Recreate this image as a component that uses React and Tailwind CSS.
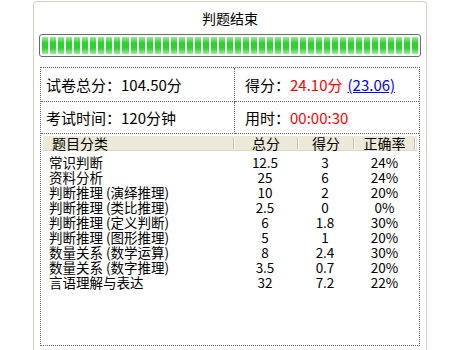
const rows = [
  { name: '常识判断', total: '12.5', score: '3', rate: '24%' },
  { name: '资料分析', total: '25', score: '6', rate: '24%' },
  { name: '判断推理 (演绎推理)', total: '10', score: '2', rate: '20%' },
  { name: '判断推理 (类比推理)', total: '2.5', score: '0', rate: '0%' },
  { name: '判断推理 (定义判断)', total: '6', score: '1.8', rate: '30%' },
  { name: '判断推理 (图形推理)', total: '5', score: '1', rate: '20%' },
  { name: '数量关系 (数学运算)', total: '8', score: '2.4', rate: '30%' },
  { name: '数量关系 (数字推理)', total: '3.5', score: '0.7', rate: '20%' },
  { name: '言语理解与表达', total: '32', score: '7.2', rate: '22%' },
];

const Divider = () => (
  <span className="h-[11px] w-[2px] border-l border-[#c5c2b0] border-r border-r-white shrink-0"></span>
);

const App = () => {
  const segments = Array.from({ length: 47 });

  return (
    <div className="w-[460px] h-[350px] overflow-hidden bg-white text-black font-['Noto_Sans_CJK_SC',sans-serif]">
      <div className="ml-[33px] mt-[1px] w-[394px] h-[360px] border border-b-0 border-[#d3d0bd] rounded-t-[4px] bg-white">
        <div className="h-[32px] flex items-center justify-center text-[14px] leading-none">判题结束</div>

        {/* progress */}
        <div className="ml-[5px] w-[382px] h-[23px] rounded-[3px] border border-[#6b6b6b] bg-white p-[2px]">
          <div className="flex gap-[2px] h-full">
            {segments.map((_, i) => (
              <div
                key={i}
                className="flex-1 bg-[linear-gradient(to_bottom,#9cec9c,#2fd12f_35%,#2fd12f_65%,#9cec9c)]"
              ></div>
            ))}
          </div>
        </div>

        <div className="ml-[6px] mt-[10px] w-[380px] h-[279px] border border-dotted border-[#666]">
          <div className="grid grid-cols-[194px_1fr] text-[15px] leading-none">
            <div className="h-[34px] border-r border-b border-dotted border-[#666] flex items-center pl-[5px]">
              试卷总分：104.50分
            </div>
            <div className="h-[34px] border-b border-dotted border-[#666] flex items-center pl-[10px]">
              得分：<span className="text-[#ff0000]">24.10分</span>
              <span className="ml-[5px] text-[#0000ff] underline">(23.06)</span>
            </div>
            <div className="h-[32px] border-r border-b border-dotted border-[#666] flex items-center pl-[5px]">
              考试时间：120分钟
            </div>
            <div className="h-[32px] border-b border-dotted border-[#666] flex items-center pl-[10px]">
              用时：<span className="text-[#ff0000]">00:00:30</span>
            </div>
          </div>

          <div className="mx-[2px] mt-[2px] h-[15px] bg-[#ece9d8] border-b border-[#dcd8c6] grid grid-cols-[190px_64px_56px_63px] text-[14px] leading-none">
            <div className="flex items-center pl-[9px]">题目分类</div>
            <div className="flex items-center">
              <Divider />
              <span className="flex-1 text-center">总分</span>
            </div>
            <div className="flex items-center">
              <Divider />
              <span className="flex-1 text-center">得分</span>
            </div>
            <div className="flex items-center">
              <Divider />
              <span className="flex-1 text-center">正确率</span>
              <Divider />
            </div>
          </div>

          <div className="mx-[2px] mt-[4px] text-[13.5px] leading-[15px]">
            {rows.map((r) => (
              <div key={r.name} className="grid grid-cols-[190px_64px_56px_63px] h-[15px]">
                <div className="pl-[6px] whitespace-pre">{r.name}</div>
                <div className="text-center">{r.total}</div>
                <div className="text-center">{r.score}</div>
                <div className="text-center">{r.rate}</div>
              </div>
            ))}
          </div>
        </div>
      </div>
    </div>
  );
};

export default App;
